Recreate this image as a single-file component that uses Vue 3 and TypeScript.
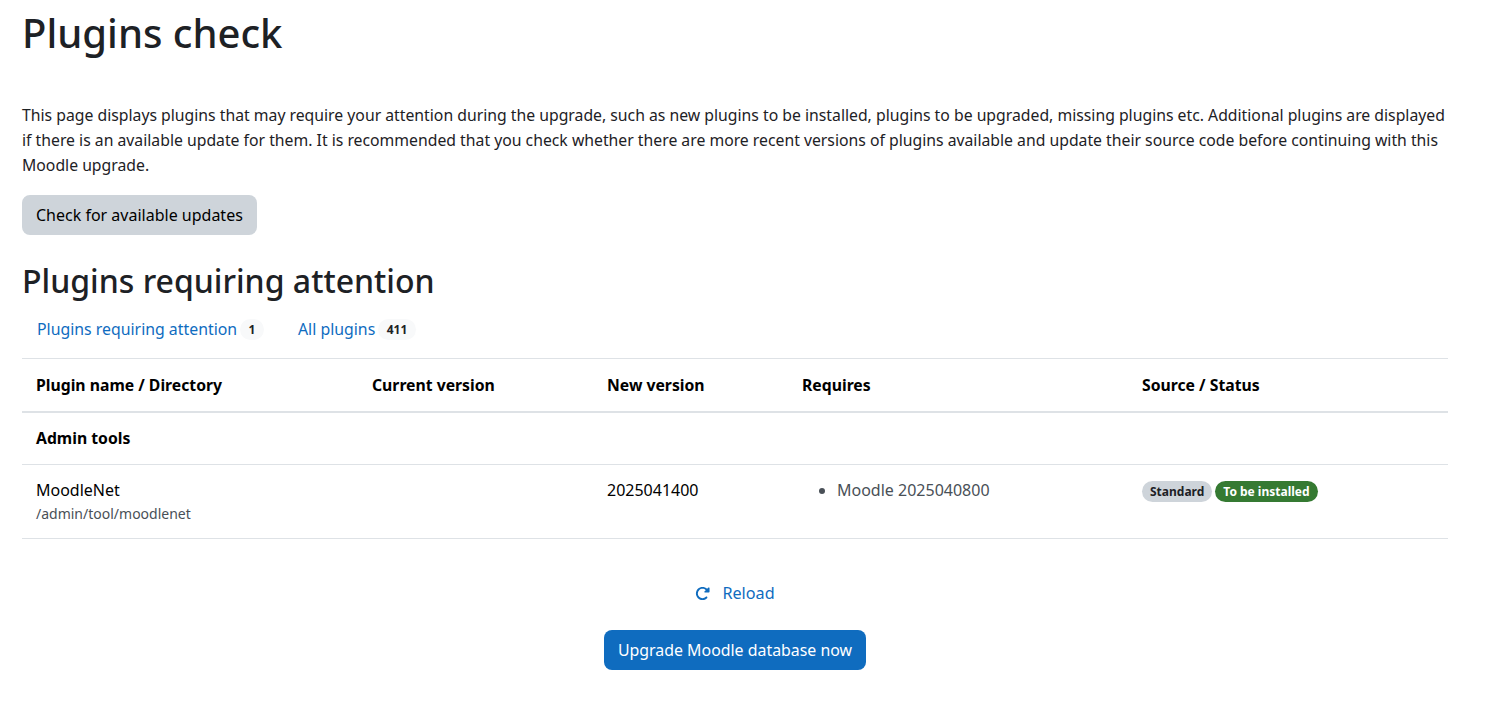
<script setup lang="ts">
const columns: string[] = ['Plugin name / Directory', 'Current version', 'New version', 'Requires', 'Source / Status']
</script>

<template>
  <main class="page">
    <h1>Plugins check</h1>
    <p class="intro">This page displays plugins that may require your attention during the upgrade, such as new plugins to be installed, plugins to be upgraded, missing plugins etc. Additional plugins are displayed if there is an available update for them. It is recommended that you check whether there are more recent versions of plugins available and update their source code before continuing with this Moodle upgrade.</p>
    <button class="btn btn-secondary" type="button">Check for available updates</button>
    <h2>Plugins requiring attention</h2>
    <nav class="filters">
      <a class="filter">Plugins requiring attention <span class="count">1</span></a>
      <a class="filter">All plugins <span class="count">411</span></a>
    </nav>
    <table>
      <colgroup>
        <col class="col-name" />
        <col class="col-current" />
        <col class="col-new" />
        <col class="col-req" />
        <col />
      </colgroup>
      <thead>
        <tr><th v-for="c in columns" :key="c">{{ c }}</th></tr>
      </thead>
      <tbody>
        <tr><th class="group" colspan="5">Admin tools</th></tr>
        <tr>
          <td>
            <div>MoodleNet</div>
            <div class="dir">/admin/tool/moodlenet</div>
          </td>
          <td></td>
          <td>2025041400</td>
          <td class="req"><ul><li>Moodle 2025040800</li></ul></td>
          <td>
            <div class="badges">
              <span class="badge standard">Standard</span>
              <span class="badge success">To be installed</span>
            </div>
          </td>
        </tr>
      </tbody>
    </table>
    <div class="actions">
      <a class="reload">
        <svg width="15" height="15" viewBox="0 0 512 512" fill="#0f6cbf"><path d="M463.5 224H472c13.3 0 24-10.7 24-24V72c0-9.700-5.800-18.500-14.800-22.200s-19.300-1.700-26.200 5.200L413.400 96.600c-87.600-86.500-228.700-86.200-315.800 1c-87.500 87.500-87.500 229.300 0 316.800s229.300 87.500 316.800 0c12.500-12.500 12.500-32.800 0-45.300s-32.800-12.500-45.300 0c-62.500 62.500-163.800 62.500-226.300 0s-62.500-163.800 0-226.300c62.200-62.200 162.700-62.500 225.300-1L327 183c-6.900 6.900-8.900 17.200-5.200 26.200s12.500 14.800 22.200 14.800H463.500z"/></svg>
        <span>Reload</span>
      </a>
      <button class="btn btn-primary" type="button">Upgrade Moodle database now</button>
    </div>
  </main>
</template>

<style>
body { margin: 0; background: #fff; }
</style>

<style scoped>
.page {
  padding: 0 41px 0 22px;
  font-family: "Noto Sans", "Open Sans", sans-serif;
  font-size: 16px;
  line-height: 25px;
  color: #1d2125;
}
h1 {
  margin: 0;
  font-size: 40px;
  line-height: 47px;
  font-weight: 500;
  padding-top: 9px;
}
.intro { margin: 47px 0 0; font-size: 15.77px; }
.btn {
  display: block;
  border: 0;
  border-radius: 8px;
  height: 40px;
  padding: 0 14px;
  font: inherit;
  font-size: 15.9px;
}
.btn-secondary { margin-top: 17px; background: #ced4da; color: #000; font-size: 16px; }
.btn-primary { background: #0f6cbf; color: #fff; }
h2 {
  margin: 23px 0 0;
  font-size: 32px;
  line-height: 46px;
  font-weight: 500;
}
.filters { display: flex; gap: 34px; padding: 0 15px; height: 33px; align-items: center; margin-top: 9px; }
.filter { color: #0f6cbf; display: inline-flex; align-items: center; gap: 3px; font-size: 15.85px; }
.count {
  background: #f8f9fa;
  color: #1d2125;
  border-radius: 10.5px;
  padding: 0 8.500px;
  font-size: 12px;
  font-weight: 700;
  line-height: 21px;
}
table { margin-top: 12px; width: 100%; border-collapse: collapse; table-layout: fixed; }
.col-name { width: 336px; }
.col-current { width: 235px; }
.col-new { width: 195px; }
.col-req { width: 340px; }
th, td { text-align: left; padding: 0 14px; vertical-align: top; }
thead th { height: 52px; vertical-align: middle; font-size: 15.75px; font-weight: 700; color: #000; border-top: 1px solid #dee2e6; border-bottom: 2px solid #dee2e6; }
.group { height: 51px; vertical-align: middle; font-size: 15.75px; color: #000; border-bottom: 1px solid #dee2e6; }
tbody tr:last-child td { height: 74px; padding-top: 13px; border-bottom: 1px solid #dee2e6; color: #000; box-sizing: border-box; }
.dir { font-size: 14px; line-height: 21px; color: #495057; }
.req ul { margin: 0; padding-left: 35px; }
tbody tr:last-child td.req { color: #495057; }
.badges { display: flex; gap: 3px; padding-top: 3px; }
.badge {
  display: block;
  border-radius: 10.5px;
  padding: 0 8px;
  font-size: 12px;
  font-weight: 700;
  line-height: 21px;
}
.standard { background: #ced4da; color: #1d2125; }
.success { background: #357a32; color: #fff; }
.actions { display: flex; flex-direction: column; align-items: center; margin-top: 42px; gap: 24px; }
.reload { color: #0f6cbf; display: inline-flex; align-items: center; gap: 12px; line-height: 25px; font-size: 16.2px; }
</style>
